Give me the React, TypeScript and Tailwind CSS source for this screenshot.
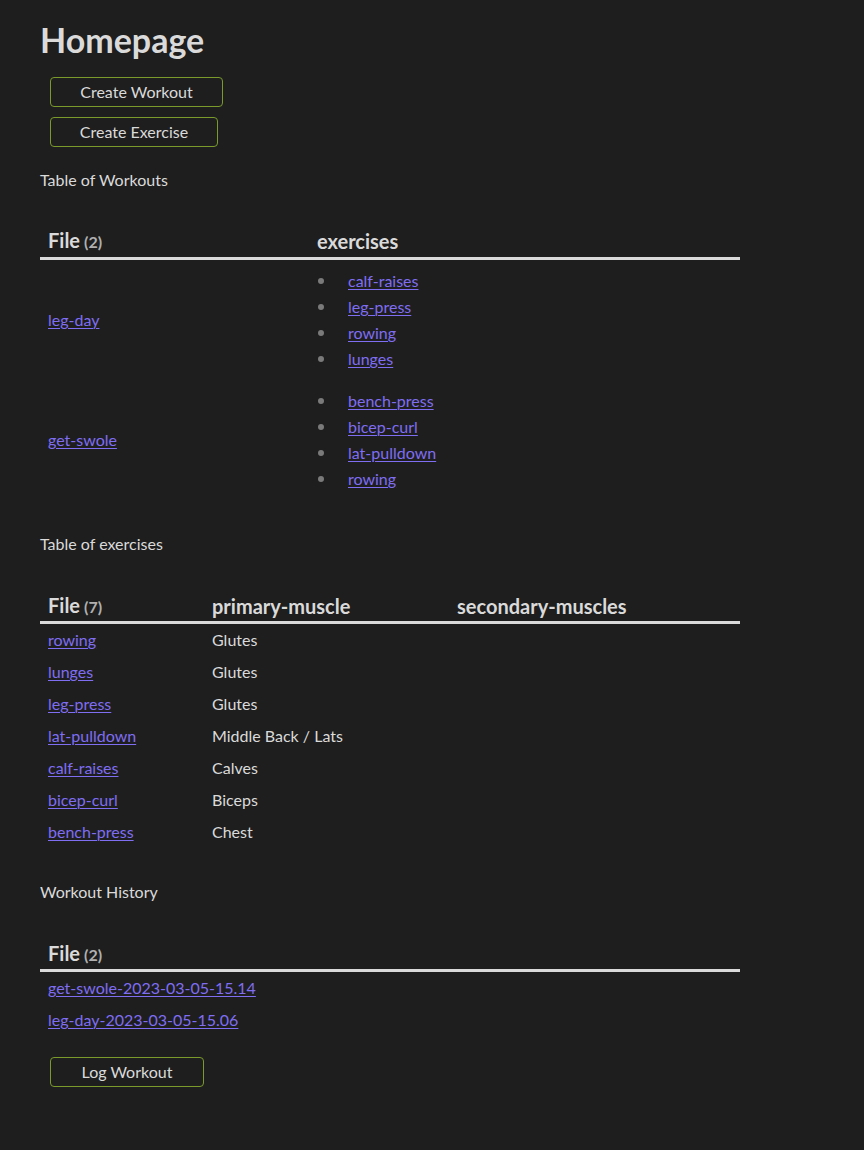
const font = { fontFamily: '"Lato", "Open Sans", sans-serif' };

function Btn({ label, w }: { label: string; w: string }) {
  return (
    <button
      className={`h-[30px] ${w} rounded-[4px] border border-[#7a9a2c] bg-[#1e1e1e] text-[16px] text-[#dadada] flex items-center justify-center`}
    >
      {label}
    </button>
  );
}

function Link({ children }: { children: string }) {
  return <a className="text-[#7f6df2] underline underline-offset-2 decoration-1 cursor-pointer">{children}</a>;
}

function Head({ label, count }: { label: string; count?: number }) {
  return (
    <th className="h-[32px] px-2 text-left align-middle text-[20px] font-bold text-[#dadada]">
      {label}
      {count !== undefined && <span className="ml-1 text-[16px] font-bold text-[#b0b0b0]">({count})</span>}
    </th>
  );
}

const workouts = [
  { name: "leg-day", ex: ["calf-raises", "leg-press", "rowing", "lunges"] },
  { name: "get-swole", ex: ["bench-press", "bicep-curl", "lat-pulldown", "rowing"] },
];

const exercises = [
  ["rowing", "Glutes"],
  ["lunges", "Glutes"],
  ["leg-press", "Glutes"],
  ["lat-pulldown", "Middle Back / Lats"],
  ["calf-raises", "Calves"],
  ["bicep-curl", "Biceps"],
  ["bench-press", "Chest"],
];

const history = ["get-swole-2023-03-05-15.14", "leg-day-2023-03-05-15.06"];

export default function App() {
  return (
    <div className="min-h-[1150px] bg-[#1e1e1e] text-[#dadada] text-[16px] leading-6" style={font}>
      <div className="pl-10 pt-[18px] w-[740px]">
        <h1 className="text-[34px] font-bold leading-[44px] text-[#dadada]">Homepage</h1>
        <div className="ml-[10px] mt-[15px] flex flex-col gap-[10px]">
          <Btn label="Create Workout" w="w-[173px]" />
          <Btn label="Create Exercise" w="w-[168px]" />
        </div>
        <p className="mt-[21px]">Table of Workouts</p>

        <table className="mt-[34px] w-[700px] border-collapse table-fixed">
          <colgroup>
            <col className="w-[269px]" />
            <col />
          </colgroup>
          <thead>
            <tr className="border-b-[3px] border-[#dadada]">
              <Head label="File" count={2} />
              <Head label="exercises" />
            </tr>
          </thead>
          <tbody>
            {workouts.map((w) => (
              <tr key={w.name}>
                <td className="px-2 align-middle">
                  <Link>{w.name}</Link>
                </td>
                <td className="px-2 py-2 align-middle">
                  <ul className="flex flex-col">
                    {w.ex.map((e) => (
                      <li key={e} className="h-[26px] flex items-center">
                        <span className="ml-[1px] mr-[24px] w-[6px] h-[6px] rounded-full bg-[#7a7a7a]" />
                        <Link>{e}</Link>
                      </li>
                    ))}
                  </ul>
                </td>
              </tr>
            ))}
          </tbody>
        </table>

        <p className="mt-[32px]">Table of exercises</p>

        <table className="mt-[35px] w-[700px] border-collapse table-fixed">
          <colgroup>
            <col className="w-[164px]" />
            <col className="w-[245px]" />
            <col />
          </colgroup>
          <thead>
            <tr className="border-b-[3px] border-[#dadada]">
              <Head label="File" count={7} />
              <Head label="primary-muscle" />
              <Head label="secondary-muscles" />
            </tr>
          </thead>
          <tbody>
            <tr className="h-[1px]" />
            {exercises.map(([n, m]) => (
              <tr key={n} className="h-[32px]">
                <td className="px-2">
                  <Link>{n}</Link>
                </td>
                <td className="px-2">{m}</td>
                <td className="px-2" />
              </tr>
            ))}
          </tbody>
        </table>

        <p className="mt-[32px]">Workout History</p>

        <table className="mt-[35px] w-[700px] border-collapse table-fixed">
          <thead>
            <tr className="border-b-[3px] border-[#dadada]">
              <Head label="File" count={2} />
            </tr>
          </thead>
          <tbody>
            <tr className="h-[1px]" />
            {history.map((h) => (
              <tr key={h} className="h-[32px]">
                <td className="px-2">
                  <Link>{h}</Link>
                </td>
              </tr>
            ))}
          </tbody>
        </table>

        <div className="ml-[10px] mt-[21px]">
          <Btn label="Log Workout" w="w-[154px]" />
        </div>
      </div>
    </div>
  );
}
